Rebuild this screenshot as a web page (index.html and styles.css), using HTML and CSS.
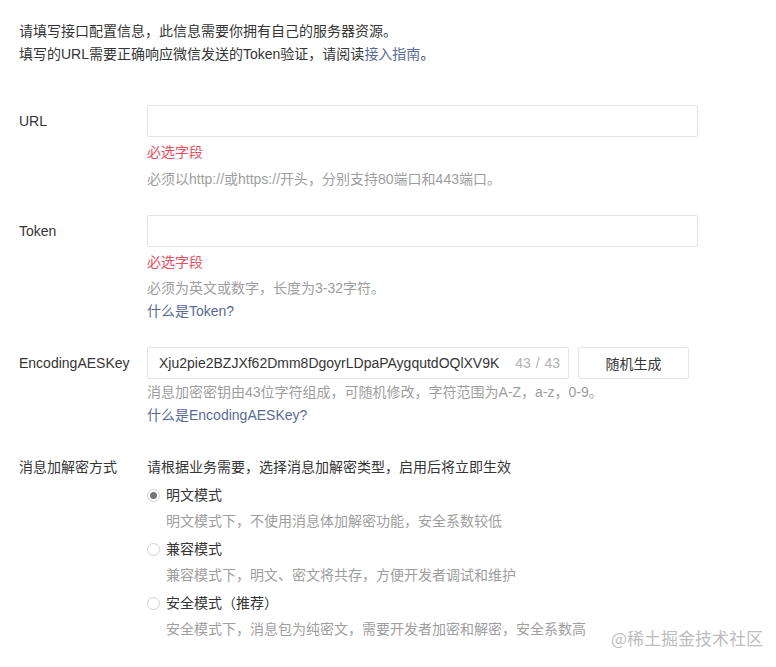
FILE: index.html
```html
<!DOCTYPE html>
<html lang="zh-CN">
<head>
<meta charset="utf-8">
<title>服务器配置</title>
<link rel="stylesheet" href="styles.css">
</head>
<body>
<div class="page">
  <div class="intro">
    <p>请填写接口配置信息，此信息需要你拥有自己的服务器资源。</p>
    <p>填写的URL需要正确响应微信发送的Token验证，请阅读<a class="link" href="#">接入指南</a>。</p>
  </div>

  <div class="form">
    <div class="row">
      <div class="label">URL</div>
      <div class="field">
        <div class="input input-wide"></div>
        <div class="error">必选字段</div>
        <div class="hint">必须以http://或https://开头，分别支持80端口和443端口。</div>
      </div>
    </div>

    <div class="row">
      <div class="label">Token</div>
      <div class="field">
        <div class="input input-wide"></div>
        <div class="error">必选字段</div>
        <div class="hint hint-tight">必须为英文或数字，长度为3-32字符。</div>
        <a class="link line" href="#">什么是Token?</a>
      </div>
    </div>

    <div class="row">
      <div class="label">EncodingAESKey</div>
      <div class="field">
        <div class="key-line">
          <div class="input input-key">
            <span class="key-text">Xju2pie2BZJXf62Dmm8DgoyrLDpaPAygqutdOQlXV9K</span>
            <span class="counter">43 / 43</span>
          </div>
          <button class="btn" type="button">随机生成</button>
        </div>
        <div class="hint hint-key">消息加密密钥由43位字符组成，可随机修改，字符范围为A-Z，a-z，0-9。</div>
        <a class="link line" href="#">什么是EncodingAESKey?</a>
      </div>
    </div>

    <div class="row row-mode">
      <div class="label label-top">消息加解密方式</div>
      <div class="field">
        <div class="mode-intro">请根据业务需要，选择消息加解密类型，启用后将立即生效</div>
        <div class="radio-row"><span class="radio checked"></span><span>明文模式</span></div>
        <div class="radio-desc">明文模式下，不使用消息体加解密功能，安全系数较低</div>
        <div class="radio-row"><span class="radio"></span><span>兼容模式</span></div>
        <div class="radio-desc">兼容模式下，明文、密文将共存，方便开发者调试和维护</div>
        <div class="radio-row"><span class="radio"></span><span>安全模式（推荐）</span></div>
        <div class="radio-desc">安全模式下，消息包为纯密文，需要开发者加密和解密，安全系数高</div>
      </div>
    </div>
  </div>

  <div class="watermark">@稀土掘金技术社区</div>
</div>
</body>
</html>
```

FILE: styles.css
```css
html, body {
  margin: 0;
  padding: 0;
  background: #ffffff;
}

body {
  font-family: "Liberation Sans", "Noto Sans CJK SC", sans-serif;
  font-size: 14px;
  color: #353535;
}

.page {
  position: relative;
  width: 776px;
  height: 667px;
  padding: 20px 19px 0 19px;
  box-sizing: border-box;
  overflow: hidden;
}

.intro p {
  margin: 0;
  line-height: 23px;
}

.link {
  color: #576b95;
  text-decoration: none;
}

.line {
  display: block;
  line-height: 23px;
}

.form {
  margin-top: 39px;
  display: flex;
  flex-direction: column;
  gap: 24px;
}

.row {
  display: flex;
  align-items: flex-start;
}

.row-mode {
  margin-top: 3px;
}

.label {
  width: 128px;
  flex: none;
  line-height: 32px;
}

.label-top {
  line-height: 26px;
}

.field {
  display: flex;
  flex-direction: column;
  align-items: flex-start;
}

.input {
  height: 32px;
  box-sizing: border-box;
  border: 1px solid #e3e3e3;
  border-radius: 2px;
  background: #fff;
}

.input-wide {
  width: 551px;
}

.error {
  margin-top: 4px;
  line-height: 23px;
  color: #e5505f;
}

.hint {
  margin-top: 4px;
  line-height: 23px;
  color: #9e9e9e;
}

.hint-tight {
  margin-top: 3px;
}

.hint-key {
  margin-top: 2px;
}

.key-line {
  display: flex;
  gap: 9px;
}

.input-key {
  width: 422px;
  display: flex;
  align-items: center;
  padding: 0 8px 0 11px;
  overflow: hidden;
}

.key-text {
  flex: 1;
  min-width: 0;
  overflow: hidden;
  white-space: nowrap;
  color: #353535;
}

.counter {
  flex: none;
  margin-left: 6px;
  color: #b2b2b2;
  word-spacing: 1px;
}

.btn {
  width: 111px;
  height: 32px;
  box-sizing: border-box;
  border: 1px solid #e3e3e3;
  border-radius: 3px;
  background: #fff;
  font-family: inherit;
  font-size: 14px;
  color: #353535;
  padding: 0;
}

.mode-intro {
  line-height: 26px;
  margin-bottom: 2px;
}

.radio-row {
  display: flex;
  align-items: center;
  gap: 6px;
  line-height: 26px;
}

.radio {
  width: 13px;
  height: 13px;
  box-sizing: border-box;
  border: 1px solid #d2d2d2;
  border-radius: 50%;
  display: flex;
  align-items: center;
  justify-content: center;
  background: #fff;
}

.radio.checked::after {
  content: "";
  width: 7px;
  height: 7px;
  border-radius: 50%;
  background: #777777;
}

.radio-desc {
  padding-left: 19px;
  line-height: 26px;
  margin-bottom: 2px;
  color: #9e9e9e;
}

.watermark {
  position: absolute;
  right: 13px;
  top: 627px;
  font-size: 17px;
  line-height: 22px;
  color: #bdbdbd;
  font-family: "Noto Sans CJK SC", sans-serif;
}
```
